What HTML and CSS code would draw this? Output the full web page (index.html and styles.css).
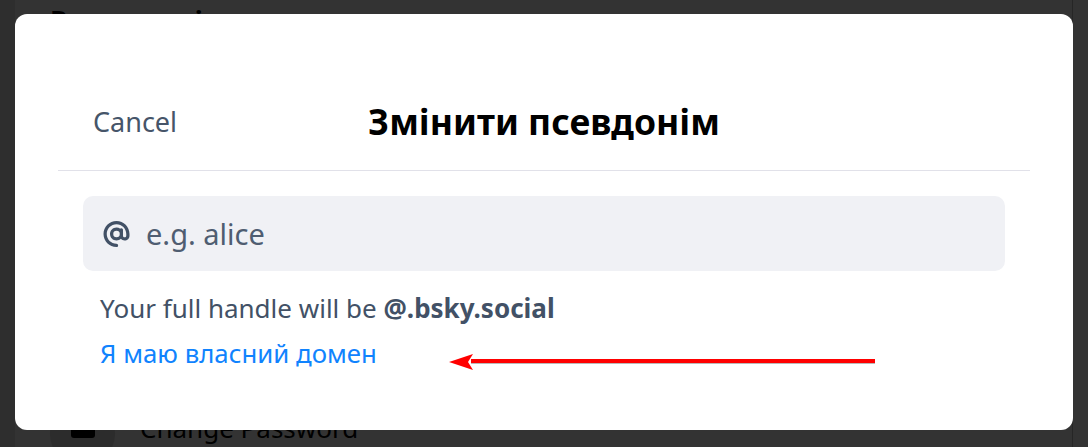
FILE: index.html
```html
<!DOCTYPE html>
<html lang="uk">
<head>
<meta charset="utf-8">
<title>Змінити псевдонім</title>
<link rel="stylesheet" href="styles.css">
</head>
<body>
<div class="page">
  <div class="side"></div>
  <main class="main">
    <h2 class="page-title">Розширені</h2>
    <div class="spacer"></div>
    <div class="row">
      <span class="row-icon"><span class="row-glyph"></span></span>
      <span class="row-label">Change Password</span>
    </div>
  </main>
  <div class="scroll"></div>
</div>

<div class="modal">
  <div class="header">
    <button class="cancel">Cancel</button>
    <h1 class="title">Змінити псевдонім</h1>
    <span></span>
  </div>
  <div class="body">
    <label class="field">
      <svg class="at" viewBox="0 0 512 512" aria-hidden="true"><path d="M256 64C150 64 64 150 64 256s86 192 192 192c17.7 0 32 14.3 32 32s-14.3 32-32 32C114.6 512 0 397.4 0 256S114.6 0 256 0S512 114.6 512 256v32c0 53-43 96-96 96c-29.3 0-55.6-13.2-73.2-33.9C320 371.1 289.5 384 256 384c-70.7 0-128-57.3-128-128s57.3-128 128-128c27.9 0 53.7 8.9 74.7 24.1c5.7-5 13.1-8.1 21.3-8.1c17.7 0 32 14.3 32 32v80 32c0 17.7 14.3 32 32 32s32-14.3 32-32V256c0-106-86-192-192-192zm64 192a64 64 0 1 0 -128 0 64 64 0 1 0 128 0z"/></svg>
      <input class="input" type="text" placeholder="e.g. alice">
    </label>
    <p class="hint">Your full handle will be <b>@.bsky.social</b></p>
    <a class="link" href="#">Я маю власний домен</a>
  </div>
</div>

<svg class="arrow" width="440" height="24" viewBox="0 0 440 24" aria-hidden="true">
  <rect x="22" y="9" width="404" height="4" fill="#8a8a8a" opacity="0.6"/>
  <rect x="22" y="8" width="404" height="4" fill="#ff0000"/>
  <polygon points="0,11 24,3 19,11 24,19" fill="#ff0000"/>
</svg>
</body>
</html>
```
FILE: styles.css
```css
html, body {
  margin: 0;
  padding: 0;
  height: 100%;
  overflow: hidden;
}
body {
  background: #333333;
  font-family: "Noto Sans", "Open Sans", sans-serif;
}
.page {
  display: flex;
  height: 447px;
}
.side {
  width: 15px;
  background: #2e2e2e;
}
.main {
  flex: 1;
  display: flex;
  flex-direction: column;
  padding-left: 35px;
}
.page-title {
  margin: 3px 0 0;
  font-size: 27.5px;
  font-weight: 700;
  line-height: 34px;
  color: #000;
}
.spacer {
  flex: 1;
}
.row {
  display: flex;
  align-items: center;
  gap: 25px;
  margin-bottom: -19px;
}
.row-icon {
  width: 65px;
  height: 65px;
  border-radius: 50%;
  background: #2c2c2c;
  display: flex;
  align-items: center;
  justify-content: center;
}
.row-glyph {
  width: 24px;
  height: 22px;
  background: #000;
  border-radius: 3px;
  margin-top: -14px;
}
.row-label {
  font-size: 26px;
  color: #000;
  margin-top: -12px;
}
.scroll {
  width: 15px;
  border-left: 1px solid #262626;
  background: #333;
}

.modal {
  position: fixed;
  left: 15px;
  top: 14px;
  width: 1058px;
  height: 416px;
  box-sizing: border-box;
  background: #fff;
  border-radius: 12px;
  padding: 77px 43px 0;
}
.header {
  display: grid;
  grid-template-columns: 1fr auto 1fr;
  align-items: center;
  height: 60px;
  padding-bottom: 19px;
  border-bottom: 1px solid #e1e1e9;
}
.cancel {
  justify-self: start;
  margin-left: 35px;
  padding: 0;
  border: 0;
  background: none;
  font-family: inherit;
  font-size: 27px;
  color: #465569;
}
.title {
  margin: 0;
  font-size: 35.5px;
  font-weight: 700;
  color: #000;
  line-height: 44px;
}
.body {
  padding: 25px 25px 0;
}
.field {
  display: flex;
  align-items: center;
  gap: 16px;
  height: 75px;
  box-sizing: border-box;
  padding-left: 20px;
  background: #f0f1f5;
  border-radius: 10px;
}
.at {
  width: 27px;
  height: 26px;
  fill: #425166;
  flex: none;
}
.input {
  flex: 1;
  border: 0;
  outline: 0;
  background: transparent;
  font-family: inherit;
  font-size: 29px;
  color: #425166;
  padding: 0;
}
.input::placeholder {
  color: #4f5d71;
}
.hint {
  margin: 19px 0 0 17px;
  font-size: 26px;
  line-height: 36px;
  color: #425166;
}
.hint b {
  font-weight: 700;
}
.link {
  display: block;
  margin: 9px 0 0 17px;
  font-size: 25.8px;
  line-height: 36px;
  color: #1083fe;
  text-decoration: none;
}
.arrow {
  position: fixed;
  left: 449px;
  top: 351px;
}
```
